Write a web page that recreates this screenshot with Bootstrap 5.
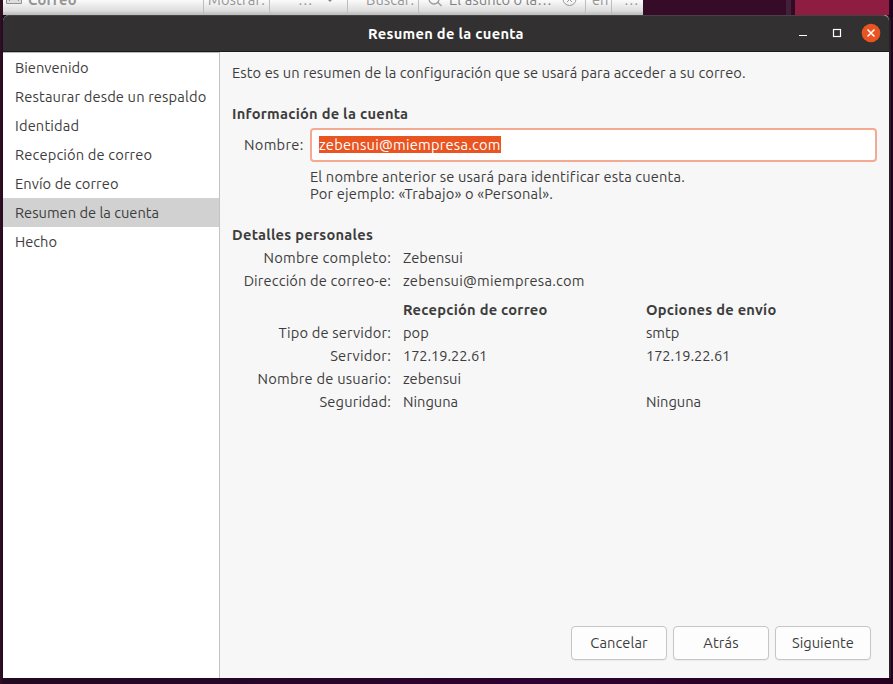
<!DOCTYPE html>
<html lang="es">
<head>
<meta charset="utf-8">
<title>Resumen de la cuenta</title>
<link rel="stylesheet" href="https://cdn.jsdelivr.net/npm/bootstrap@5.3.0/dist/css/bootstrap.min.css">
<style>
html,body{height:100%;overflow:hidden}
body{font-family:Ubuntu,"Noto Sans",sans-serif;font-size:14.667px;line-height:17px;color:#3d3d3d;background:linear-gradient(90deg,#32101f 0,#220a22 3px,#2c0230 60%,#25001f 100%)}
b,h1,h2{font-size:14.667px;line-height:17px;font-weight:700;margin:0;letter-spacing:.26px}
.desk{height:15px}
.mailbar{width:643px;background:linear-gradient(#fbfbfb,#dedede 70%,#b9b9b9);color:#959595;border-left:3px solid #32101f}
.mailbar>div{height:15px;border-right:1px solid #bdbdbd;line-height:17px}
.mailbar span,.mailbar b{margin-top:-9px;white-space:nowrap}
.mailbar .plain{border:0}
.field{border-left:1px solid #bdbdbd;border-radius:0 0 5px 5px}
.query{color:#808080}
.night{width:143px;background:#350b28}
.stripe{width:9px;background:linear-gradient(90deg,#43203a 5px,#310b25 5px)}
.wine{background:#8f1d41}
.win{width:888px;height:663px;margin-left:3px;background:#f7f7f7;border-right:2px solid #222;border-radius:6px 6px 0 0}
.title{height:37px;background:#323030;border-top:1px solid #454343;border-bottom:1px solid #1c1a1a;border-radius:6px 6px 0 0;color:#fff}
.title h1{padding-bottom:1px;letter-spacing:.29px}
.controls{right:8px;top:7px}
.side{--bs-list-group-border-width:0;width:217px;background:#fff;border-top:1px solid #bababa;border-right:1px solid #c3c3c3}
.side .list-group-item{height:29px;margin:0;padding:6px 12px;border:0;background:transparent;color:#3d3d3d;line-height:17px;white-space:nowrap}
.side .list-group-item.active{background:#d1d1d1;margin:0}
.main{padding:12px 12px 18px 12px}
.main h2{height:17px}
.num{letter-spacing:-.08px}
.ls1{letter-spacing:.08px}
.ls2{letter-spacing:.15px}
.ls3{letter-spacing:.24px}
.name-row{margin:6px 0 0 12px;height:34px}
.name-row label{width:66px;letter-spacing:.3px;margin-bottom:1px}
.entry{height:34px;border:2px solid #f4aa90;border-radius:4px;background:#fff;padding-left:7px}
.entry span{background:#e95420;color:#fff;height:17px;margin-bottom:1px}
.hint{margin:6px 0 0 78px}
.facts{display:grid;grid-template-columns:159px 231px 1fr;column-gap:12px;row-gap:6px;margin-top:6px}
.facts>:nth-child(3n+1){text-align:right}
.servers{margin-top:12px}
.actions{gap:6px;padding-right:6px}
.actions .btn{width:96px;height:34px;padding:0 0 2px;font-size:14.667px;line-height:17px;color:#3d3d3d;background:#fdfdfd;border:1px solid #c6c6c6;border-radius:4px;box-shadow:0 1px 1px #0000000d}
</style>
</head>
<body>
<div class="desk d-flex overflow-hidden">
  <div class="mailbar d-flex">
    <div class="d-flex" style="width:201px"><svg width="25" height="12" fill="#ddd" stroke="#929292"><path d="M3.500-5v8.500h15v-8.500M6 1l3-3M16 1l-3-3"/></svg><b class="d-block">Correo</b></div>
    <div class="plain d-flex ps-1" style="width:65px"><span class="ls2">Mostrar:</span></div>
    <div class="field d-flex" style="width:79px"><span style="padding-left:28px" class="ls3">…</span><svg style="margin-left:13px" width="10" height="5" fill="#888"><path d="M0-2h8l-4 4z"/></svg></div>
    <div class="plain d-flex" style="width:70px"><span style="padding-left:18px" class="ls1">Buscar:</span></div>
    <div class="field d-flex" style="width:168px"><svg width="30" height="8" fill="none" stroke="#999" stroke-width="1.300"><circle cx="15" cy="-1" r="5"/><path d="M18.500 2l4 4"/></svg><span class="query ls1">El asunto o la…</span><svg class="ms-auto me-2" width="15" height="8" fill="none" stroke="#999"><circle cx="7.500" cy="-1" r="6.500"/><path d="M5-3l5 5M10-3L5 2"/></svg></div>
    <div class="d-flex" style="width:26px"><span style="padding-left:6px">en</span></div>
    <div class="d-flex plain ps-2"><span class="ms-1">…</span></div>
  </div>
  <div class="night"></div><div class="stripe"></div><div class="wine" style="width:94px"></div>
</div>
<div class="win d-flex flex-column">
  <header class="title d-flex justify-content-center align-items-center position-relative">
    <h1>Resumen de la cuenta</h1>
    <svg class="controls position-absolute" width="84" height="20" fill="none" stroke="#fff"><path d="M2 12.500h8"/><rect x="36.500" y="6.500" width="7" height="7" stroke-width="1.200"/><circle cx="74" cy="10" r="9.300" fill="#e95420" stroke="none"/><path d="M70.500 6.500l7 7M77.500 6.500l-7 7" stroke-width="1.500"/></svg>
  </header>
  <div class="d-flex flex-grow-1">
    <nav class="side list-group list-group-flush rounded-0 flex-shrink-0">
      <div class="list-group-item">Bienvenido</div>
      <div class="list-group-item ls2">Restaurar desde un respaldo</div>
      <div class="list-group-item ls2">Identidad</div>
      <div class="list-group-item ls2">Recepción de correo</div>
      <div class="list-group-item ls1">Envío de correo</div>
      <div class="list-group-item active">Resumen de la cuenta</div>
      <div class="list-group-item">Hecho</div>
    </nav>
    <main class="main flex-grow-1 d-flex flex-column">
      <div class="ls1">Esto es un resumen de la configuración que se usará para acceder a su correo.</div>
      <h2 style="margin-top:24px">Información de la cuenta</h2>
      <div class="name-row d-flex align-items-center"><label>Nombre:</label><div class="entry flex-grow-1 d-flex align-items-center"><span class="ls3">zebensui@miempresa.com</span></div></div>
      <div class="hint ls2">El nombre anterior se usará para identificar esta cuenta.<br>Por ejemplo: «Trabajo» o «Personal».</div>
      <h2 style="margin-top:24px">Detalles personales</h2>
      <div class="facts">
        <span class="ls3">Nombre completo:</span><span>Zebensui</span><span></span>
        <span class="ls2">Dirección de correo-e:</span><span class="ls3">zebensui@miempresa.com</span><span></span>
      </div>
      <div class="facts servers">
        <span></span><b>Recepción de correo</b><b>Opciones de envío</b>
        <span class="ls2">Tipo de servidor:</span><span>pop</span><span>smtp</span>
        <span class="ls3">Servidor:</span><span class="num">172.19.22.61</span><span class="num">172.19.22.61</span>
        <span class="ls3">Nombre de usuario:</span><span>zebensui</span><span></span>
        <span class="ls2">Seguridad:</span><span>Ninguna</span><span>Ninguna</span>
      </div>
      <div class="actions d-flex justify-content-end mt-auto"><button class="btn ls1">Cancelar</button><button class="btn ls2">Atrás</button><button class="btn">Siguiente</button></div>
    </main>
  </div>
</div>
<script src="https://cdn.jsdelivr.net/npm/bootstrap@5.3.0/dist/js/bootstrap.bundle.min.js"></script>
</body>
</html>
